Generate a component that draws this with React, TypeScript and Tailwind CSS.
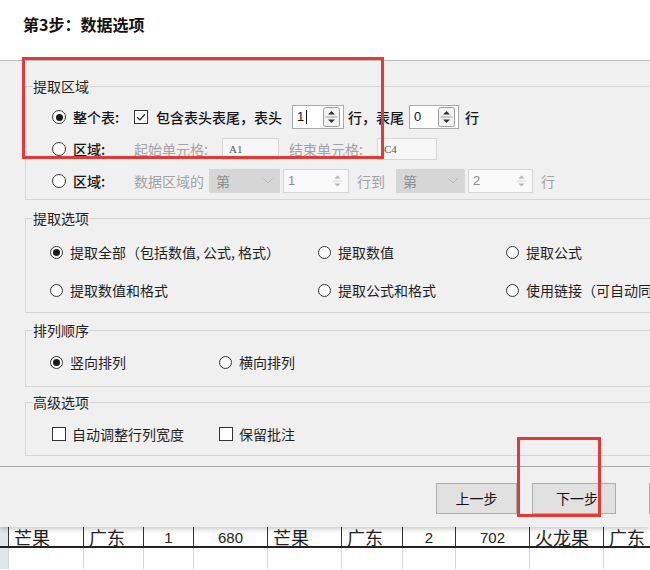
import type { ReactNode } from "react";

function Radio({ checked = false, big = false }: { checked?: boolean; big?: boolean }) {
  return (
    <span
      className={`flex shrink-0 items-center justify-center rounded-full border border-[#333] bg-white ${
        big ? "h-[14px] w-[14px]" : "h-[13px] w-[13px]"
      }`}
    >
      {checked && <span className="h-[7px] w-[7px] rounded-full bg-[#1a1a1a]" />}
    </span>
  );
}

function Checkbox({ checked = false }: { checked?: boolean }) {
  return (
    <span className="flex h-[14px] w-[14px] shrink-0 items-center justify-center border border-[#333] bg-white">
      {checked && (
        <svg width="12" height="12" viewBox="0 0 12 12" fill="none">
          <path d="M2.2 6.2 L4.9 8.9 L9.9 3.2" stroke="#222" strokeWidth="1.3" />
        </svg>
      )}
    </span>
  );
}

function SpinArrows({ disabled = false }: { disabled?: boolean }) {
  if (disabled) {
    return (
      <svg width="15" height="20" viewBox="0 0 15 20">
        <line x1="3" y1="10" x2="12" y2="10" stroke="#dadada" />
        <path d="M4.5 7.5 L7.5 4.5 L10.5 7.5 Z" fill="#b4b4b4" />
        <path d="M4.5 12.5 L7.5 15.5 L10.5 12.5 Z" fill="#b4b4b4" />
      </svg>
    );
  }
  return (
    <svg width="17" height="20" viewBox="0 0 17 20">
      <rect x="0.5" y="0.5" width="16" height="19" rx="2" fill="#f3f3f3" stroke="#9c9c9c" />
      <line x1="2.5" y1="10" x2="14.5" y2="10" stroke="#9c9c9c" />
      <path d="M5 7.5 L8.5 4 L12 7.5 Z" fill="#333" />
      <path d="M5 12.5 L8.5 16 L12 12.5 Z" fill="#333" />
    </svg>
  );
}

function SpinInput({
  value,
  className,
  disabled = false,
  caret = false,
}: {
  value: string;
  className: string;
  disabled?: boolean;
  caret?: boolean;
}) {
  return (
    <div
      className={`flex h-[24px] shrink-0 items-center justify-between border pl-[4px] pr-[3px] font-['Liberation_Sans',sans-serif] text-[13px] ${
        disabled ? "border-[#d6d6d6] bg-[#f9f9f9] text-[#8c8c8c]" : "border-[#a9a9a9] bg-white text-[#111]"
      } ${className}`}
    >
      <span className="flex items-center">
        {value}
        {caret && <span className="ml-[2px] h-[14px] w-px bg-[#111]" />}
      </span>
      <SpinArrows disabled={disabled} />
    </div>
  );
}

function CellInput({ value, className }: { value: string; className: string }) {
  return (
    <div
      className={`flex h-[22px] shrink-0 items-center border border-[#d6d6d6] bg-[#f7f7f7] pl-[6px] font-['Liberation_Serif',serif] text-[11px] text-[#555] ${className}`}
    >
      {value}
    </div>
  );
}

function Dropdown({ className }: { className: string }) {
  return (
    <div className={`flex h-[24px] shrink-0 items-center justify-between bg-[#d6d6d6] pl-[7px] pr-[7px] text-[#8e8e8e] ${className}`}>
      <span>第</span>
      <svg width="10" height="6" viewBox="0 0 10 6" fill="none">
        <path d="M0.5 0.5 L5 5 L9.5 0.5" stroke="#b3b3b3" />
      </svg>
    </div>
  );
}

function Group({ title, className, children }: { title: string; className: string; children: ReactNode }) {
  return (
    <fieldset className={`ml-[25px] mr-[-20px] border border-[#d5d5d5] ${className}`}>
      <legend className="ml-[7px] text-[14px] leading-[20px] text-[#1f1f1f]">{title}</legend>
      {children}
    </fieldset>
  );
}

function Option({ label, checked = false }: { label: string; checked?: boolean }) {
  return (
    <div className="flex h-[20px] items-center whitespace-nowrap">
      <Radio checked={checked} />
      <span className="ml-[7px]">{label}</span>
    </div>
  );
}

const sheetCells = [
  { text: "芒果", w: "w-[75px]", num: false },
  { text: "广东", w: "w-[60px]", num: false },
  { text: "1", w: "w-[50px]", num: true },
  { text: "680", w: "w-[74px]", num: true },
  { text: "芒果", w: "w-[74px]", num: false },
  { text: "广东", w: "w-[61px]", num: false },
  { text: "2", w: "w-[53px]", num: true },
  { text: "702", w: "w-[74px]", num: true },
  { text: "火龙果", w: "w-[74px]", num: false },
  { text: "广东", w: "w-[60px]", num: false },
];

export default function App() {
  return (
    <div className="relative h-[570px] w-[650px] overflow-hidden bg-white font-['Noto_Sans_CJK_SC',sans-serif] text-[14px] text-[#1f1f1f]">
      {/* Wizard dialog */}
      <div className="relative z-10 h-[527px] bg-[#f0f0f0] shadow-[0_2px_5px_rgba(0,0,0,0.22)]">
        <div className="h-[61px] border-b border-[#bcbcbc] bg-white pl-[23px] pt-[14px]">
          <h1 className="text-[16px] font-bold leading-[20px] text-[#111]">第3步：数据选项</h1>
        </div>

        <div className="pt-[15px]">
          {/* 提取区域 */}
          <Group title="提取区域" className="">
            <div className="flex flex-col gap-[8px] pb-[6px] pl-[26px] pt-[9px] whitespace-nowrap">
              <div className="flex h-[24px] items-center">
                <Radio checked big />
                <span className="ml-[7px] w-[61px] shrink-0 font-medium text-[#151515]">整个表:</span>
                <Checkbox checked />
                <span className="ml-[8px] w-[136px] shrink-0 font-medium text-[#151515]">包含表头表尾，表头</span>
                <SpinInput value="1" caret className="w-[52px]" />
                <span className="ml-[4px] w-[61px] shrink-0 font-medium text-[#151515]">行，表尾</span>
                <SpinInput value="0" className="w-[50px]" />
                <span className="ml-[6px] font-medium text-[#151515]">行</span>
              </div>
              <div className="flex h-[24px] items-center">
                <Radio big />
                <span className="ml-[7px] w-[61px] shrink-0 font-medium text-[#151515]">区域:</span>
                <span className="w-[88px] shrink-0 text-[#a3a3a3]">起始单元格:</span>
                <CellInput value="A1" className="w-[57px]" />
                <span className="ml-[10px] w-[88px] shrink-0 text-[#a3a3a3]">结束单元格:</span>
                <CellInput value="C4" className="w-[60px]" />
              </div>
              <div className="flex h-[24px] items-center">
                <Radio big />
                <span className="ml-[7px] w-[61px] shrink-0 font-medium text-[#151515]">区域:</span>
                <span className="w-[75px] shrink-0 text-[#a3a3a3]">数据区域的</span>
                <Dropdown className="w-[71px]" />
                <SpinInput value="1" disabled className="ml-[3px] w-[66px]" />
                <span className="ml-[8px] w-[39px] shrink-0 text-[#a3a3a3]">行到</span>
                <Dropdown className="w-[69px]" />
                <SpinInput value="2" disabled className="ml-[3px] w-[65px]" />
                <span className="ml-[8px] text-[#a3a3a3]">行</span>
              </div>
            </div>
          </Group>

          {/* 提取选项 */}
          <Group title="提取选项" className="mt-[8px]">
            <div className="grid grid-cols-[268px_188px_1fr] gap-y-[18px] pb-[12px] pl-[24px] pt-[14px]">
              <Option checked label="提取全部（包括数值, 公式, 格式）" />
              <Option label="提取数值" />
              <Option label="提取公式" />
              <Option label="提取数值和格式" />
              <Option label="提取公式和格式" />
              <Option label="使用链接（可自动同步更新）" />
            </div>
          </Group>

          {/* 排列顺序 */}
          <Group title="排列顺序" className="mt-[7px]">
            <div className="flex pb-[14px] pl-[24px] pt-[12px]">
              <div className="w-[169px]">
                <Option checked label="竖向排列" />
              </div>
              <Option label="横向排列" />
            </div>
          </Group>

          {/* 高级选项 */}
          <Group title="高级选项" className="mt-[5px]">
            <div className="flex pb-[11px] pl-[26px] pt-[12px] whitespace-nowrap">
              <div className="flex h-[20px] w-[167px] items-center">
                <Checkbox />
                <span className="ml-[6px]">自动调整行列宽度</span>
              </div>
              <div className="flex h-[20px] items-center">
                <Checkbox />
                <span className="ml-[6px]">保留批注</span>
              </div>
            </div>
          </Group>

          {/* Footer buttons */}
          <div className="mt-[10px] flex border-t border-[#a9a9a9] pl-[436px] pt-[16px] whitespace-nowrap">
            <button className="h-[31px] w-[81px] shrink-0 border border-[#adadad] bg-[#e1e1e1] text-[14px] text-[#111]">
              上一步
            </button>
            <button className="ml-[15px] h-[31px] w-[84px] shrink-0 border border-[#adadad] bg-[#e1e1e1] pl-[6px] text-[14px] text-[#111]">
              下一步
            </button>
            {/* next button is off-screen, only its edge shows */}
            <button className="ml-[33px] h-[31px] w-[80px] shrink-0 border border-[#adadad] bg-[#e1e1e1]" />
          </div>
        </div>
      </div>

      {/* Spreadsheet behind the dialog */}
      <div className="flex h-[21px] border-b-2 border-[#222] whitespace-nowrap">
        <div className="w-[8px] shrink-0 bg-[#dfe6ee]" />
        {sheetCells.map((c, i) => (
          <div
            key={i}
            className={`${c.w} shrink-0 border-l border-[#333] leading-[21px] text-[#222] ${
              c.num ? "text-center font-['Liberation_Sans',sans-serif] text-[15px]" : "pl-[5px] text-[18px]"
            }`}
          >
            {c.text}
          </div>
        ))}
        <div className="flex-1 border-l border-[#333]" />
      </div>
      <div className="flex h-[21px]">
        <div className="w-[8px] shrink-0 bg-[#dfe6ee]" />
        {sheetCells.map((c, i) => (
          <div key={i} className={`${c.w} shrink-0 border-l border-[#d4d4d4]`} />
        ))}
        <div className="flex-1 border-l border-[#d4d4d4]" />
      </div>

      {/* Red annotation boxes */}
      <div className="absolute left-[22px] top-[57px] z-20 h-[102px] w-[362px] border-[3px] border-[#e53935]" />
      <div className="absolute left-[517px] top-[437px] z-20 h-[80px] w-[84px] border-[3px] border-[#e53935]" />
    </div>
  );
}
